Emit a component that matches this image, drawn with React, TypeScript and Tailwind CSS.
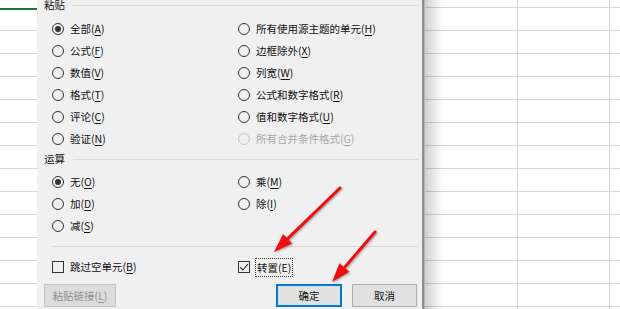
import React from "react";

const font = "font-['Microsoft_YaHei','Noto_Sans_CJK_SC',sans-serif]";

const pasteLeft = [
  { name: "全部", key: "A", checked: true },
  { name: "公式", key: "F" },
  { name: "数值", key: "V" },
  { name: "格式", key: "T" },
  { name: "评论", key: "C" },
  { name: "验证", key: "N" },
];

const pasteRight = [
  { name: "所有使用源主题的单元", key: "H" },
  { name: "边框除外", key: "X" },
  { name: "列宽", key: "W" },
  { name: "公式和数字格式", key: "R" },
  { name: "值和数字格式", key: "U" },
  { name: "所有合并条件格式", key: "G", disabled: true },
];

const opsLeft = [
  { name: "无", key: "O", checked: true },
  { name: "加", key: "D" },
  { name: "减", key: "S" },
];

const opsRight = [
  { name: "乘", key: "M" },
  { name: "除", key: "I" },
];

type Opt = { name: string; key: string; checked?: boolean; disabled?: boolean };

function Label({ name, k }: { name: string; k: string }) {
  return (
    <span>
      {name}(<span className="underline underline-offset-2">{k}</span>)
    </span>
  );
}

function Radio({ o }: { o: Opt }) {
  return (
    <div
      className={`h-[22px] flex items-center gap-[6px] ${
        o.disabled ? "text-[#a6a6a6]" : "text-[#111]"
      }`}
    >
      <span
        className={`w-[12px] h-[12px] rounded-full border flex items-center justify-center ${
          o.disabled ? "border-[#c4c4c4]" : "border-[#333]"
        }`}
      >
        {o.checked && <span className="w-[6px] h-[6px] rounded-full bg-[#333]" />}
      </span>
      <Label name={o.name} k={o.key} />
    </div>
  );
}

function Check({ checked }: { checked?: boolean }) {
  return (
    <span className="w-[12px] h-[12px] border border-[#333] flex items-center justify-center bg-transparent">
      {checked && (
        <svg width="10" height="10" viewBox="0 0 10 10">
          <path d="M1 5.2 L3.8 8 L9 2" fill="none" stroke="#222" strokeWidth="1.1" />
        </svg>
      )}
    </span>
  );
}

function Header({ text, tight }: { text: string; tight?: boolean }) {
  return (
    <div className={`h-[16px] flex items-center pl-[7px] pr-[4px] gap-[8px] ${tight ? "mt-[-3px]" : "mt-[1px]"}`}>
      <span className="text-[#111]">{text}</span>
      <div className="flex-1 h-px bg-[#d9d9d9]" />
    </div>
  );
}

function GridCol({ w, first, left }: { w: string; first: number; left?: boolean }) {
  return (
    <div className={`${w} flex flex-col ${left ? "" : "border-r border-[#d6d6d6]"}`}>
      <div className="border-b border-[#d6d6d6] shrink-0" style={{ height: first }} />
      {Array.from({ length: 13 }).map((_, i) => (
        <div key={i} className="h-[23px] shrink-0 border-b border-[#d6d6d6]" />
      ))}
    </div>
  );
}

function Arrow({ x1, y1, x2, y2 }: { x1: number; y1: number; x2: number; y2: number }) {
  const dx = x2 - x1;
  const dy = y2 - y1;
  const len = Math.hypot(dx, dy);
  const ux = dx / len;
  const uy = dy / len;
  const bx = x2 - ux * 19;
  const by = y2 - uy * 19;
  const nx = -uy;
  const ny = ux;
  const pts = `${x2},${y2} ${bx + nx * 6.5},${by + ny * 6.5} ${bx - nx * 6.5},${by - ny * 6.5}`;
  return (
    <g>
      <line x1={x1} y1={y1} x2={bx + ux * 2} y2={by + uy * 2} stroke="#f20d0d" strokeWidth="3" strokeLinecap="round" />
      <polygon points={pts} fill="#f20d0d" />
    </g>
  );
}

export default function App() {
  return (
    <div className={`relative w-[620px] h-[309px] overflow-hidden flex bg-white ${font} text-[10.5px]`}>
      {/* left sheet strip */}
      <div className="w-[37px] shrink-0 flex flex-col">
        <div className="h-[31px] shrink-0 border-b border-[#d6d6d6]">
          <div className="h-[10px] border-b-2 border-[#217346]" />
        </div>
        {Array.from({ length: 12 }).map((_, i) => (
          <div key={i} className="h-[23px] shrink-0 border-b border-[#d6d6d6]" />
        ))}
      </div>

      {/* dialog */}
      <div className="w-[387px] shrink-0 bg-[#f0f0f0] border-r-2 border-[#8e8e8e] flex flex-col">
        <Header text="粘贴" tight />
        <div className="grid grid-cols-[186px_1fr] pl-[15px] mt-[5px]">
          <div className="flex flex-col">
            {pasteLeft.map((o) => (
              <Radio key={o.key} o={o} />
            ))}
          </div>
          <div className="flex flex-col">
            {pasteRight.map((o) => (
              <Radio key={o.key} o={o} />
            ))}
          </div>
        </div>

        <Header text="运算" />
        <div className="grid grid-cols-[186px_1fr] pl-[15px] mt-[4px]">
          <div className="flex flex-col">
            {opsLeft.map((o) => (
              <Radio key={o.key} o={o} />
            ))}
          </div>
          <div className="flex flex-col">
            {opsRight.map((o) => (
              <Radio key={o.key} o={o} />
            ))}
          </div>
        </div>

        <div className="ml-[15px] mr-[4px] mt-[9px] h-px bg-[#d9d9d9]" />

        <div className="grid grid-cols-[186px_1fr] pl-[15px] mt-[9px] text-[#111]">
          <div className="h-[22px] flex items-center gap-[6px]">
            <Check />
            <Label name="跳过空单元" k="B" />
          </div>
          <div className="h-[22px] flex items-center gap-[5px]">
            <Check checked />
            <span className="border border-dotted border-[#333] px-[1px] leading-[17px]">转置(E)</span>
          </div>
        </div>

        <div className="flex items-center pl-[7px] pr-[5px] mt-[6px]">
          <div className="w-[72px] h-[23px] border border-[#c2c2c2] bg-[#dcdcdc] text-[#8f8f8f] flex items-center justify-center">
            <Label name="粘贴链接" k="L" />
          </div>
          <div className="flex-1" />
          <div className="w-[66px] h-[23px] border-2 border-[#0078d7] bg-[#e1e1e1] text-[#111] flex items-center justify-center">
            确定
          </div>
          <div className="w-[65px] h-[23px] ml-[10px] border border-[#adadad] bg-[#e1e1e1] text-[#111] flex items-center justify-center">
            取消
          </div>
        </div>
      </div>

      {/* right sheet */}
      <div className="relative flex-1 flex border-l border-[#b4b4b4]">
        <GridCol w="w-[93px]" first={8} />
        <GridCol w="w-[92px]" first={8} />
        <GridCol w="flex-1" first={8} left />
        <div className="absolute inset-y-0 left-0 w-[18px] bg-linear-to-r from-[#00000030] to-transparent" />
      </div>

      <svg
        className="absolute inset-0 pointer-events-none"
        width="620"
        height="309"
        style={{ filter: "drop-shadow(1.5px 1.5px 1px rgba(0,0,0,0.35))" }}
      >
        <Arrow x1={340} y1={188} x2={274} y2={252} />
        <Arrow x1={375} y1={232} x2={332} y2={282} />
      </svg>
    </div>
  );
}
